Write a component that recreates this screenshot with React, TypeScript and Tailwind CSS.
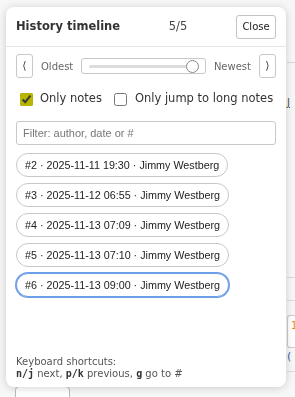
const entries = [
  { n: 2, when: "2025-11-11 19:30", who: "Jimmy Westberg" },
  { n: 3, when: "2025-11-12 06:55", who: "Jimmy Westberg" },
  { n: 4, when: "2025-11-13 07:09", who: "Jimmy Westberg" },
  { n: 5, when: "2025-11-13 07:10", who: "Jimmy Westberg" },
  { n: 6, when: "2025-11-13 09:00", who: "Jimmy Westberg" },
];

export default function App() {
  const current = 6;

  return (
    <div className="relative min-h-screen overflow-hidden bg-[#f7f7f7] font-['DejaVu_Sans',sans-serif] text-[#222]">
      {/* page behind the popup */}
      <div className="pl-[287px]">
        <div className="h-[62px]" />
        <div className="h-[36px] border-t border-[#d6d6d6]" />
        <div className="text-[10px] leading-[10px] text-[#555] underline">J</div>
        <div className="h-[169px]" />
        <div className="h-[23px] border-t border-[#dcdcdc]" />
        <div className="h-[15px] border-t border-[#dcdcdc]" />
        <div className="h-[33px] rounded-l-[3px] border border-r-0 border-[#ccc] bg-white pl-[3px] pt-[2px] text-[10px] text-[#e08a1e]">
          1
        </div>
        <div className="pt-[3px] text-[11px] leading-[12px] text-[#3a5fa8]">(</div>
        <div className="mt-[8px] border-t border-[#dcdcdc]" />
      </div>
      <div className="ml-[15px] mt-[14px] h-[20px] w-[55px] rounded-[4px] border border-[#bbb] bg-white" />

      {/* history popup */}
      <div className="fixed left-[6px] top-[7px] flex h-[380px] w-[280px] flex-col rounded-[8px] bg-white shadow-[0_1px_8px_rgba(0,0,0,0.18)]">
        <div className="flex h-[40px] items-center border-b border-[#e6e6e6] px-[10px]">
          <span className="text-[11.5px] font-bold text-[#333]">History timeline</span>
          <span className="flex-1 text-center text-[11.5px] text-[#444]">5/5</span>
          <button className="h-[24px] w-[40px] rounded-[3px] border border-[#c4c4c4] bg-white text-[10px] text-[#222]">
            Close
          </button>
        </div>

        <div className="flex flex-1 flex-col px-[10px]">
          <div className="mt-[7px] flex h-[24px] items-center gap-[8px]">
            <button className="flex h-[24px] w-[17px] items-center justify-center rounded-[3px] border border-[#c8c8c8] bg-white text-[11px] text-[#444]">
              ⟨
            </button>
            <span className="text-[10px] text-[#666]">Oldest</span>
            <div className="flex h-[16px] flex-1 items-center rounded-[3px] border border-[#c8c8c8] bg-white pl-[7px] pr-[6px]">
              <div className="h-[3px] flex-1 rounded-full bg-[#dcdcdc]" />
              <div className="-ml-[6px] h-[13px] w-[13px] rounded-full border border-[#8a8a8a] bg-white" />
            </div>
            <span className="text-[10px] text-[#666]">Newest</span>
            <button className="flex h-[24px] w-[17px] items-center justify-center rounded-[3px] border border-[#c8c8c8] bg-white text-[11px] text-[#444]">
              ⟩
            </button>
          </div>

          <div className="mt-[13px] flex h-[16px] items-center text-[11.5px] text-[#333]">
            <label className="flex items-center">
              <input type="checkbox" defaultChecked className="ml-[4px] mr-[7px] h-[13px] w-[13px] accent-[#b8b600]" />
              Only notes
            </label>
            <label className="ml-[12px] flex items-center">
              <input type="checkbox" className="mr-[8px] h-[13px] w-[13px]" />
              Only jump to long notes
            </label>
          </div>

          <input
            type="text"
            placeholder="Filter: author, date or #"
            className="mt-[14px] h-[24px] w-full rounded-[3px] border border-[#c8c8c8] px-[6px] font-['Liberation_Sans',sans-serif] text-[11px] outline-none placeholder:text-[#777]"
          />

          <div className="mt-[8px] flex flex-col items-start gap-[6px]">
            {entries.map((e) => (
              <button
                key={e.n}
                className={
                  e.n === current
                    ? "h-[24px] rounded-full border border-[#6f9ee8] bg-white px-[8px] font-['Liberation_Sans',sans-serif] text-[10.75px] text-[#222] shadow-[0_0_0_1px_#6f9ee8]"
                    : "h-[24px] rounded-full border border-[#c8c8c8] bg-white px-[8px] font-['Liberation_Sans',sans-serif] text-[10.75px] text-[#222]"
                }
              >
                #{e.n} · {e.when} · {e.who}
              </button>
            ))}
          </div>

          <div className="mt-auto pb-[7px] text-[10px] leading-[12px] text-[#555]">
            <div>Keyboard shortcuts:</div>
            <div>
              <b className="font-['DejaVu_Sans_Mono',monospace] text-[#333]">n/j</b> next,{" "}
              <b className="font-['DejaVu_Sans_Mono',monospace] text-[#333]">p/k</b> previous,{" "}
              <b className="font-['DejaVu_Sans_Mono',monospace] text-[#333]">g</b> go to #
            </div>
          </div>
        </div>
      </div>
    </div>
  );
}
